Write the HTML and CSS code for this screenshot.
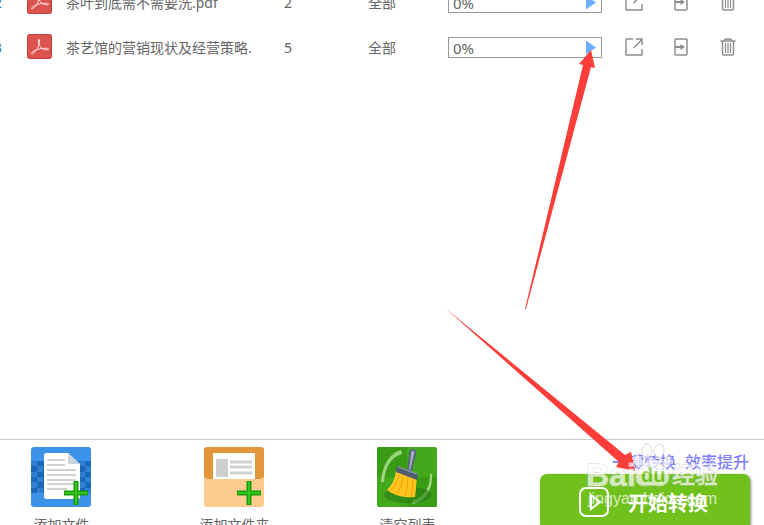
FILE: index.html
```html
<!DOCTYPE html>
<html lang="zh-CN">

<head>
    <meta charset="UTF-8">
    <meta name="viewport" content="width=device-width, initial-scale=1.0">
    <title>PDF转换</title>
    <link rel="stylesheet" href="styles.css">
</head>

<body>
    <!-- shared icons -->
    <svg class="sprite" aria-hidden="true">
        <symbol id="icon-pdf" viewBox="0 0 26 26">
            <rect x=".5" y=".5" width="25" height="25" rx="2" fill="#dc524e" stroke="#b93b37" />
            <path d="M12.300 5.500c-1.300.4-.3 3.500.2 5.200.9 2.600 3.500 5.300 6.500 5.700 2.300.3 3.700 0 3.500-.8-.3-.9-3.700-1-6.500-.6-3.600.4-6.300 1.300-8.300 2.400-2.600 1.300-3.600 2.800-2.700 3.300 1.500.4 4.800-3.600 6.600-7.500 1.300-2.800 2.200-7.900.7-7.700z" fill="none" stroke="#fbe3e2" />
        </symbol>
        <symbol id="icon-open" viewBox="0 0 20 20">
            <path d="M9 2H2.500Q2 2 2 2.500v15q0 .5.500.5H18v-6M9.500 11L18 2.500M12 2h6v6" />
        </symbol>
        <symbol id="icon-export" viewBox="0 0 20 20">
            <rect x="4" y="2" width="12" height="16" rx="1" />
            <path d="M4 10h7" stroke-width="2" />
            <path d="M9.500 7l4.500 3-4.500 3z" fill="#8e8e8e" stroke="none" />
        </symbol>
        <symbol id="icon-trash" viewBox="0 0 20 20">
            <path d="M2.500 4h15M6.500 4q0-2 2-2h3q2 0 2 2M4.500 4v12.500q0 1.500 1.500 1.500h8q1.500 0 1.500-1.500V4" />
            <path d="M7.500 6v10M10 6v10M12.500 6v10" stroke-width="1.200" />
        </symbol>
        <symbol id="icon-plus" viewBox="0 0 24 24">
            <path d="M9.500 0h5v9.500H24v5h-9.500V24h-5v-9.500H0v-5h9.500z" fill="#189c10" />
            <path d="M11 1h2v10h10v2H13v10h-2V13H1v-2h10z" fill="#34c41a" />
        </symbol>
    </svg>

    <main class="file-list">
        <table class="file-table">
            <colgroup>
                <col class="col-no">
                <col class="col-icon">
                <col class="col-name">
                <col class="col-pages">
                <col class="col-range">
                <col class="col-state">
                <col class="col-action">
                <col class="col-action">
                <col class="col-action">
                <col>
            </colgroup>
            <tbody>
                <tr>
                    <td class="no">2</td>
                    <td><svg class="pdf-icon"><use href="#icon-pdf" /></svg></td>
                    <td>茶叶到底需不需要洗.pdf</td>
                    <td>2</td>
                    <td>全部</td>
                    <td>
                        <div class="progress">0%<button type="button" class="play" aria-label="开始"></button></div>
                    </td>
                    <td><button type="button" class="action" aria-label="打开"><svg><use href="#icon-open" /></svg></button></td>
                    <td><button type="button" class="action" aria-label="输出"><svg><use href="#icon-export" /></svg></button></td>
                    <td><button type="button" class="action" aria-label="删除"><svg><use href="#icon-trash" /></svg></button></td>
                    <td></td>
                </tr>
                <tr>
                    <td class="no">3</td>
                    <td><svg class="pdf-icon"><use href="#icon-pdf" /></svg></td>
                    <td>茶艺馆的营销现状及经营策略.</td>
                    <td>5</td>
                    <td>全部</td>
                    <td>
                        <div class="progress">0%<button type="button" class="play" aria-label="开始"></button></div>
                    </td>
                    <td><button type="button" class="action" aria-label="打开"><svg><use href="#icon-open" /></svg></button></td>
                    <td><button type="button" class="action" aria-label="输出"><svg><use href="#icon-export" /></svg></button></td>
                    <td><button type="button" class="action" aria-label="删除"><svg><use href="#icon-trash" /></svg></button></td>
                    <td></td>
                </tr>
            </tbody>
        </table>
    </main>

    <footer class="toolbar">
        <div class="tools">
            <button type="button" class="tool">
                <svg viewBox="0 0 60 60">
                    <rect width="60" height="60" rx="3" fill="#3d92ea" />
                    <path d="M0 14h60v32H0z" fill="#1b67b8" />
                    <path d="M0 14h6v5H0zM6 19h6v6H6zM0 25h6v5H0zM6 30h6v5H6zM0 35h6v6H0zM6 41h6v5H6zM48 14h6v5h-6zM54 19h6v6h-6zM48 25h6v5h-6zM54 30h6v5h-6zM48 35h6v6h-6zM54 41h6v5h-6z" fill="#3080d4" />
                    <path d="M15 6h22l12 11v33q0 2-2 2H15q-2 0-2-2V8q0-2 2-2z" fill="#fff" />
                    <path d="M37 6l12 11H37z" fill="#c9d4df" />
                    <path d="M16 13h18M16 18h18M16 23h29M16 28h29M16 33h29M16 37h29M16 42h20" stroke="#d2d2d2" stroke-width="2" />
                    <use href="#icon-plus" x="33" y="34" width="24" height="24" />
                </svg>
                <span>添加文件</span>
            </button>
            <button type="button" class="tool">
                <svg viewBox="0 0 60 60">
                    <path d="M3 0h54q3 0 3 3v32H0V3q0-3 3-3z" fill="#e3963b" />
                    <path d="M9 6h42v27H9z" fill="#fff" />
                    <path d="M12 12h12v18H12z" fill="#cfcfcf" />
                    <path d="M26 15h22M26 20h22M26 26h22" stroke="#d2d2d2" stroke-width="3" />
                    <path d="M0 30l3 2h54l3-2v27q0 3-3 3H3q-3 0-3-3z" fill="#ffcc90" />
                    <use href="#icon-plus" x="33" y="34" width="24" height="24" />
                </svg>
                <span>添加文件夹</span>
            </button>
            <button type="button" class="tool">
                <svg viewBox="0 0 60 60">
                    <rect width="60" height="60" rx="2" fill="#44a81d" />
                    <path d="M0 2q0-2 2-2h28v30H0zM30 30h30v28q0 2-2 2H30z" fill="#399c14" />
                    <path d="M4 35C5 18 13 6 24 3l1 4C14 10 8 20 7 35zM55 27c1 16-7 28-20 30l1-4c11-2 17-12 17-26z" fill="#9bd57e" />
                    <ellipse cx="31" cy="48" rx="24" ry="8" fill="#287b13" opacity=".6" />
                    <path d="M31 24l2-17q0-4 3-4t2 4l-4 17z" fill="#a3aebf" stroke="#59677d" stroke-width="2" />
                    <path d="M19 24l21 6c-1 7-1 13-2 20-10 1-20-1-28-7 5-5 8-11 9-19z" fill="#ffc51e" />
                    <path d="M22 28q-2 10-8 15M26 29q-1 11-6 18M31 30q0 11-3 19M36 31q0 10-2 18" fill="none" stroke="#e5a010" />
                    <path d="M20 19l21 8-1 6-21-8z" fill="#505c70" />
                    <path d="M21 20l19 7" stroke="#97a5b8" />
                </svg>
                <span>清空列表</span>
            </button>
        </div>
        <div class="convert">
            <p class="slogan"><span>一键转换</span><span>效率提升</span></p>
            <button type="button" class="start">
                <svg viewBox="0 0 30 30"><rect x="1" y="1" width="28" height="28" rx="6" /><path d="M12 8l9 7-9 7z" /></svg>
                <span>开始转换</span>
            </button>
        </div>
    </footer>

    <svg class="arrows" viewBox="0 0 764 525" aria-hidden="true">
        <path d="M591 50l4 18-4-1-65 242h-1l58-244-4-1zM445 308l180 147 6-3 4 19-19-4 3-5z" />
    </svg>

    <!-- stamp over the start button -->
    <div class="stamp">
        <svg viewBox="0 0 150 80" aria-label="Baidu经验 jingyan.baidu.com">
            <g class="paw">
                <ellipse cx="54" cy="26" rx="4" ry="6" transform="rotate(-15 54 26)" />
                <ellipse cx="63" cy="16" rx="5" ry="7" />
                <ellipse cx="75" cy="16" rx="5" ry="7" transform="rotate(10 75 16)" />
                <ellipse cx="83" cy="27" rx="4" ry="6" transform="rotate(20 83 27)" />
                <path d="M68 24c-5 0-6 4-10 7-9 6-9 20 3 20 4 0 9-1 13 0 13 1 14-14 6-20-5-3-7-7-12-7z" />
            </g>
            <text class="brand" x="2" y="51">Bai</text>
            <text class="brand-du" x="57" y="47">du</text>
            <text class="brand-cn" x="88" y="48">经验</text>
            <text class="site" x="4" y="69">jingyan.baidu.com</text>
        </svg>
    </div>
</body>

</html>
```

FILE: styles.css
```css
:root {
    --text-color: #666;
    --icon-color: #8e8e8e;
    --green: #70c11c;
    --arrow-color: #fc3d39;
}

* {
    margin: 0;
    padding: 0;
    box-sizing: border-box;
}

body {
    position: relative;
    display: flex;
    flex-direction: column;
    height: 100vh;
    overflow: hidden;
    background: #fff;
    color: var(--text-color);
    font-family: "Noto Sans", "Noto Sans CJK SC", sans-serif;
    font-size: 14px;
}

button {
    border: none;
    background: none;
    color: inherit;
    font: inherit;
    cursor: pointer;
}

.sprite {
    position: absolute;
    width: 0;
    height: 0;
}

/* file list, scrolled down to its last rows */
.file-list {
    flex: 1;
    min-height: 0;
    overflow: hidden;
}

.file-table {
    width: calc(100% + 20px);
    margin: -20px 0 0 -20px;
    table-layout: fixed;
    border-collapse: collapse;
}

.file-table tr {
    height: 45px;
}

.file-table td {
    vertical-align: middle;
    line-height: 20px;
    white-space: nowrap;
}

.col-no {
    width: 47px;
}

.col-icon {
    width: 39px;
}

.col-name {
    width: 218px;
}

.col-pages {
    width: 84px;
}

.col-range {
    width: 80px;
}

.col-state {
    width: 176px;
}

.col-action {
    width: 47px;
}

.file-table .no {
    padding-left: 14px;
    color: #3f7fc4;
}

.pdf-icon {
    display: block;
    width: 25px;
    height: 25px;
    margin-bottom: 2px;
}

.progress {
    display: flex;
    align-items: center;
    justify-content: space-between;
    width: 154px;
    height: 21px;
    padding: 0 5px 0 4px;
    border: 1px solid #999;
    font-size: 15px;
}

.play {
    width: 10px;
    height: 14px;
    background: #6eadff;
    clip-path: polygon(0 0, 100% 50%, 0 100%);
}

.action {
    display: block;
    width: 20px;
    height: 20px;
    margin-bottom: 2px;
}

.action svg {
    display: block;
    width: 20px;
    height: 20px;
    fill: none;
    stroke: var(--icon-color);
    stroke-width: 1.5;
}

/* bottom bar */
.toolbar {
    display: flex;
    justify-content: space-between;
    flex: 0 0 86px;
    padding: 7px 14px 0 9px;
    border-top: 1px solid #ccc;
    overflow: hidden;
}

.tools {
    display: flex;
    gap: 70px;
}

.tool {
    display: flex;
    flex-direction: column;
    align-items: center;
    gap: 8px;
    width: 103px;
}

.tool svg {
    flex: none;
    width: 60px;
    height: 60px;
}

.tool span {
    padding-left: 2px;
    line-height: 20px;
}

.convert {
    width: 210px;
}

.slogan {
    display: flex;
    justify-content: flex-end;
    gap: 9px;
    padding: 3px 1px 0 0;
    color: #8080ff;
    font-size: 16px;
    font-weight: 500;
    line-height: 24px;
}

.start {
    display: flex;
    align-items: center;
    justify-content: center;
    gap: 19px;
    width: 100%;
    height: 56px;
    padding-right: 3px;
    border-radius: 7px;
    background: var(--green);
    box-shadow: 1px 1px 3px #888;
    color: #fff;
    font-size: 20px;
    font-weight: bold;
}

.start svg {
    width: 30px;
    height: 30px;
    fill: none;
    stroke: #fff;
    stroke-width: 2;
}

/* arrows and stamp lie over the page */
.arrows {
    position: absolute;
    top: 0;
    left: 0;
    width: 764px;
    height: 525px;
    fill: var(--arrow-color);
    pointer-events: none;
}

.stamp {
    position: absolute;
    right: 30px;
    bottom: 10px;
    width: 150px;
    height: 80px;
    opacity: 0.7;
    pointer-events: none;
}

.stamp svg {
    display: block;
    width: 150px;
    height: 80px;
    overflow: visible;
    fill: #fff;
}

.paw {
    stroke: #ccc;
}

.brand,
.brand-du,
.brand-cn {
    font-family: "Liberation Sans", "Noto Sans CJK SC", sans-serif;
    font-weight: bold;
    stroke: #ccc;
    stroke-width: 1px;
    paint-order: stroke;
}

.brand {
    font-size: 32px;
}

.brand-du {
    fill: var(--green);
    stroke: none;
    font-size: 20px;
}

.brand-cn {
    font-size: 23px;
    font-weight: 500;
}

.site {
    font-family: "Liberation Sans", sans-serif;
    font-size: 16px;
}
```
